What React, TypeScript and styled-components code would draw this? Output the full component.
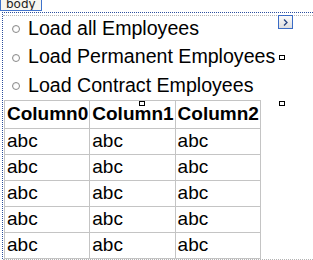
import styled, { createGlobalStyle } from "styled-components";

const GlobalStyle = createGlobalStyle`
  html, body {
    margin: 0;
    padding: 0;
    background: #ffffff;
  }
  body {
    font-family: "Liberation Sans", Arial, sans-serif;
    color: #000000;
    overflow: hidden;
  }
`;

const Page = styled.div`
  position: relative;
  width: 313px;
  height: 260px;
  overflow: hidden;
`;

const Tag = styled.div`
  display: block;
  width: fit-content;
  box-sizing: border-box;
  height: 11px;
  padding: 0 5px;
  border: 1px solid #3f73cc;
  border-top: none;
  background: #f7f6f0;
  font-family: "DejaVu Sans", Tahoma, sans-serif;
  font-size: 12px;
  line-height: 8px;
  color: #222222;
  overflow: hidden;
`;

const Surface = styled.div`
  margin-top: 1px;
  margin-left: 2px;
  border-top: 1px dotted #2c4f9e;
  border-left: 1px dotted #2c4f9e;
  height: 260px;
`;

const Form = styled.div`
  margin-top: 2px;
  border-top: 1px dotted #b4b4b4;
  border-bottom: 1px dotted #b4b4b4;
  width: 400px;
`;

const RadioList = styled.div`
  display: flex;
  flex-direction: column;
  margin-top: -2px;
  padding-left: 9px;
`;

const RadioRow = styled.label`
  display: flex;
  align-items: center;
  height: 28.5px;
  font-size: 19.6px;
  white-space: nowrap;
`;

const Circle = styled.span`
  box-sizing: border-box;
  width: 8px;
  height: 8px;
  margin-right: 8px;
  margin-top: 2px;
  border-radius: 50%;
  border: 1px solid #8a8a8a;
  background: radial-gradient(circle at 60% 60%, #ffffff 40%, #e2e2e2 100%);
`;

const Table = styled.table`
  border-collapse: collapse;
  margin-left: 1px;
  border-right: 1px solid #a0a0a0;
  border-bottom: 1px solid #a0a0a0;
`;

const Th = styled.th`
  box-sizing: border-box;
  height: 28px;
  padding: 0 1px 0 2px;
  border: 1px solid #c4c4c4;
  font-size: 19px;
  font-weight: bold;
  text-align: left;
`;

const Td = styled.td`
  box-sizing: border-box;
  height: 26px;
  padding: 0 2px;
  border: 1px solid #c4c4c4;
  font-size: 19px;
`;

const NextButton = styled.div`
  position: absolute;
  left: 278px;
  top: 15px;
  box-sizing: border-box;
  width: 15px;
  height: 14px;
  border: 1px solid #3b6cc6;
  background: linear-gradient(#fbfbfb, #dedede);
  display: flex;
  align-items: center;
  justify-content: center;
`;

const Handle = styled.span<{ $x: number; $y: number }>`
  position: absolute;
  left: ${({ $x }) => $x}px;
  top: ${({ $y }) => $y}px;
  box-sizing: border-box;
  width: 6px;
  height: 5px;
  border: 1px solid #000000;
  background: #ffffff;
`;

const labels = [
  "Load all Employees",
  "Load Permanent Employees",
  "Load Contract Employees",
];

const rows = Array.from({ length: 5 });

export default function App() {
  return (
    <Page>
      <GlobalStyle />
      <Tag>body</Tag>
      <Surface>
        <Form>
          <RadioList>
            {labels.map((label) => (
              <RadioRow key={label}>
                <Circle />
                {label}
              </RadioRow>
            ))}
          </RadioList>
          <Table>
            <thead>
              <tr>
                <Th>Column0</Th>
                <Th>Column1</Th>
                <Th>Column2</Th>
              </tr>
            </thead>
            <tbody>
              {rows.map((_, i) => (
                <tr key={i}>
                  <Td>abc</Td>
                  <Td>abc</Td>
                  <Td>abc</Td>
                </tr>
              ))}
            </tbody>
          </Table>
        </Form>
      </Surface>
      <NextButton>
        <svg width="5" height="7" viewBox="0 0 5 7">
          <path d="M1 0.5 L4 3.5 L1 6.5" fill="none" stroke="#23407e" strokeWidth="1.3" />
        </svg>
      </NextButton>
      <Handle $x={279} $y={55} />
      <Handle $x={279} $y={101} />
      <Handle $x={139} $y={101} />
    </Page>
  );
}
